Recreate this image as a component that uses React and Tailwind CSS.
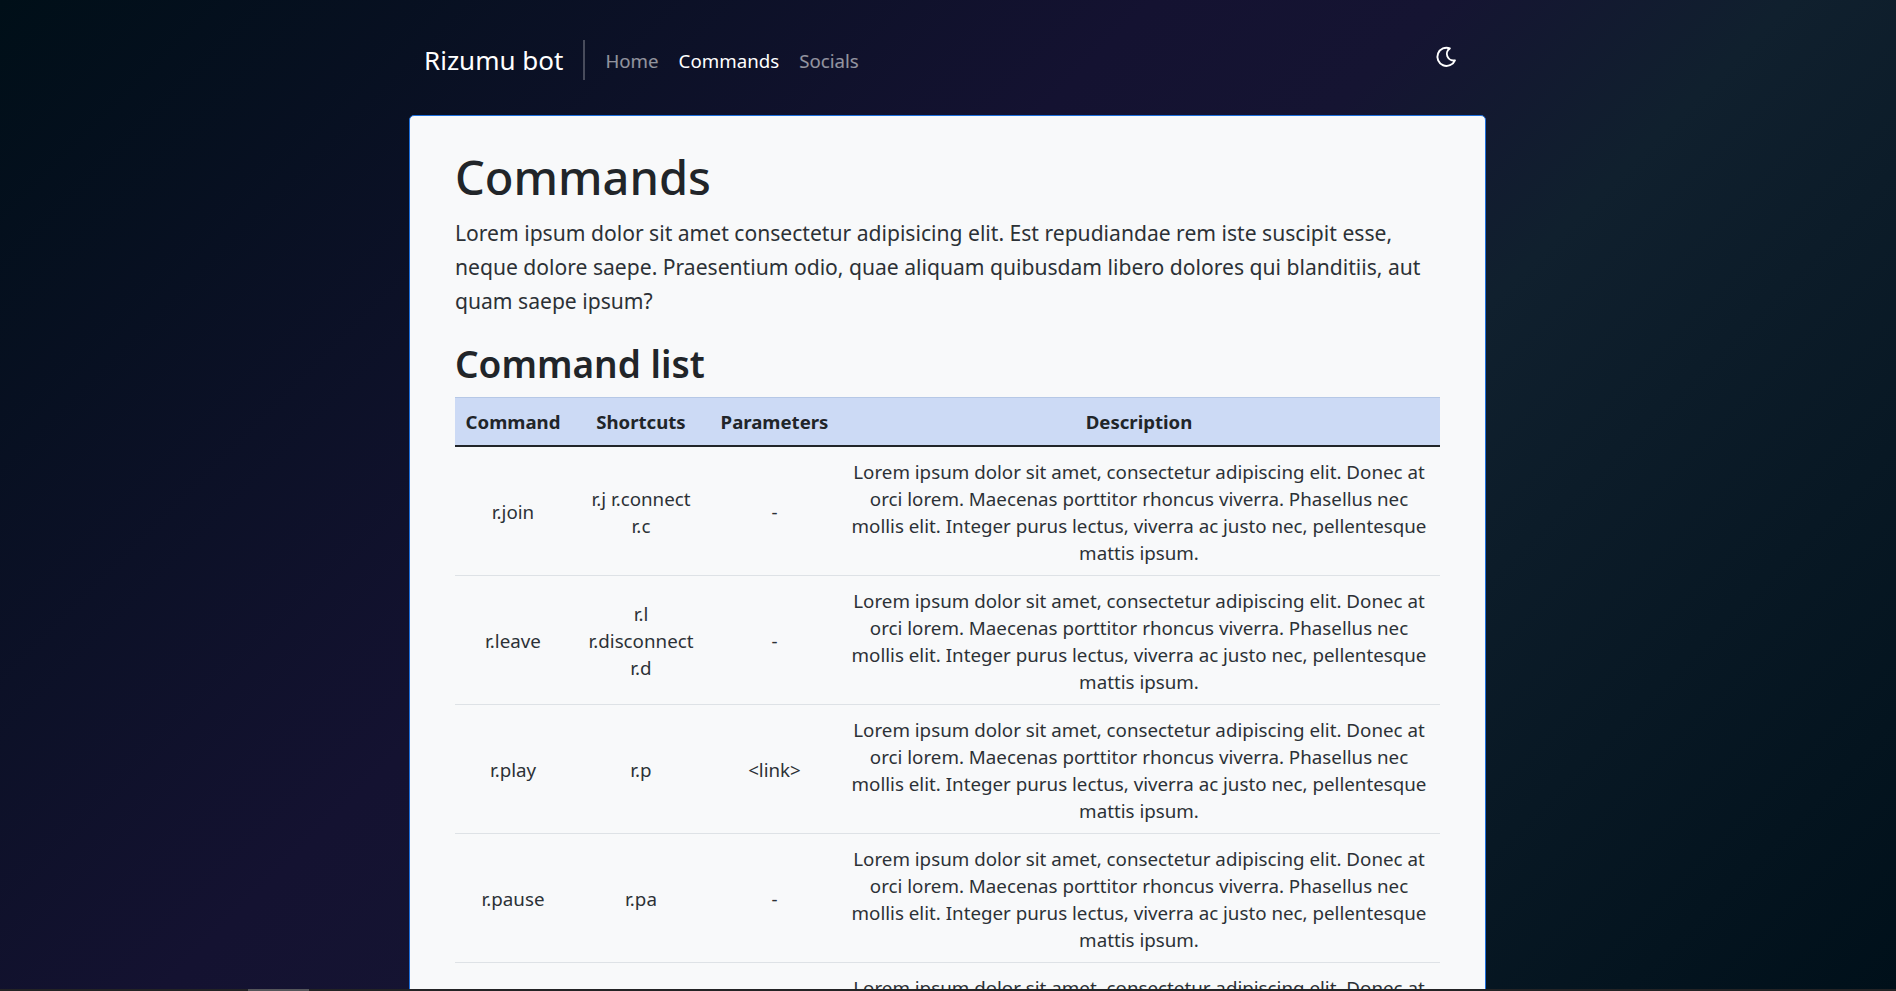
import React from "react";

const lorem =
  "Lorem ipsum dolor sit amet, consectetur adipiscing elit. Donec at orci lorem. Maecenas porttitor rhoncus viverra. Phasellus nec mollis elit. Integer purus lectus, viverra ac justo nec, pellentesque mattis ipsum.";

const commands = [
  { name: "r.join", shortcuts: "r.j r.connect r.c", params: "-" },
  { name: "r.leave", shortcuts: "r.l r.disconnect r.d", params: "-" },
  { name: "r.play", shortcuts: "r.p", params: "<link>" },
  { name: "r.pause", shortcuts: "r.pa", params: "-" },
  { name: "r.resume", shortcuts: "r.re", params: "-" },
];

const App = () => {
  return (
    <div className="flex h-[991px] flex-col bg-[linear-gradient(135deg,#000f18_0%,#141231_40%,#151432_50%,#10202e_62%,#00101a_100%)] font-['Noto_Sans',sans-serif] text-[#212529]">
      <div className="min-h-0 flex-1 overflow-hidden">
        <div className="ml-[409px] w-[1077px]">
          <nav className="flex h-[115px] items-center pl-[15px] pr-[15px] pt-[5px]">
            <a className="text-[26px] leading-none text-white">Rizumu bot</a>
            <div className="mx-[20px] h-[40px] w-[2px] bg-white/25"></div>
            <div className="flex gap-[20px] pt-[2px] text-[18.7px] text-white/55">
              <a>Home</a>
              <a className="text-white">Commands</a>
              <a>Socials</a>
            </div>
            <svg
              className="ml-auto mr-[13px] mb-[7px]"
              width="23"
              height="23"
              viewBox="0 0 24 24"
              fill="none"
              stroke="white"
              strokeWidth="2"
              strokeLinejoin="round"
            >
              <path d="M15.5 3.5A9.5 9.5 0 1 0 20.8 16A6.9 6.9 0 0 1 15.5 3.5Z" />
            </svg>
          </nav>

          <main className="rounded-[5px] border border-[#1d6fdc] bg-[#f8f9fa] px-[45px] pt-[33px]">
            <h1 className="text-[47px] font-medium leading-[1.2]">Commands</h1>
            <p className="mt-[11px] text-[21.1px] leading-[34px] text-[#2c3136]">
              Lorem ipsum dolor sit amet consectetur adipisicing elit. Est repudiandae rem iste suscipit esse, neque dolore saepe. Praesentium odio, quae aliquam quibusdam libero dolores qui blanditiis, aut quam saepe ipsum?
            </p>
            <h2 className="mt-[24px] mb-[10px] text-[37px] font-semibold leading-[1.2]">Command list</h2>
            <table className="w-full table-fixed border-collapse text-center text-[18.75px] leading-[27px] text-[#2c3136]">
              <thead className="text-[#212529]">
                <tr className="border-t border-b-2 border-t-[#b6c8e6] border-b-[#212529] bg-[#ccdaf5] text-[18.6px]">
                  <th className="w-[116px] px-[8px] py-[10px] font-bold">Command</th>
                  <th className="w-[140px] px-[8px] py-[10px] font-bold">Shortcuts</th>
                  <th className="w-[127px] px-[8px] py-[10px] font-bold">Parameters</th>
                  <th className="px-[8px] py-[10px] font-bold">Description</th>
                </tr>
              </thead>
              <tbody>
                {commands.map((c) => (
                  <tr key={c.name} className="border-b border-[#dee2e6]">
                    <td className="px-[8px] pt-[11px] pb-[9px]">{c.name}</td>
                    <td className="px-[13px] pt-[11px] pb-[9px]">{c.shortcuts}</td>
                    <td className="px-[8px] pt-[11px] pb-[9px]">{c.params}</td>
                    <td className="px-[8px] pt-[11px] pb-[9px]">{lorem}</td>
                  </tr>
                ))}
              </tbody>
            </table>
          </main>
        </div>
      </div>
      <div className="h-[2px] bg-[#232325]">
        <div className="ml-[248px] h-full w-[61px] bg-[#55565a]"></div>
      </div>
    </div>
  );
};

export default App;
